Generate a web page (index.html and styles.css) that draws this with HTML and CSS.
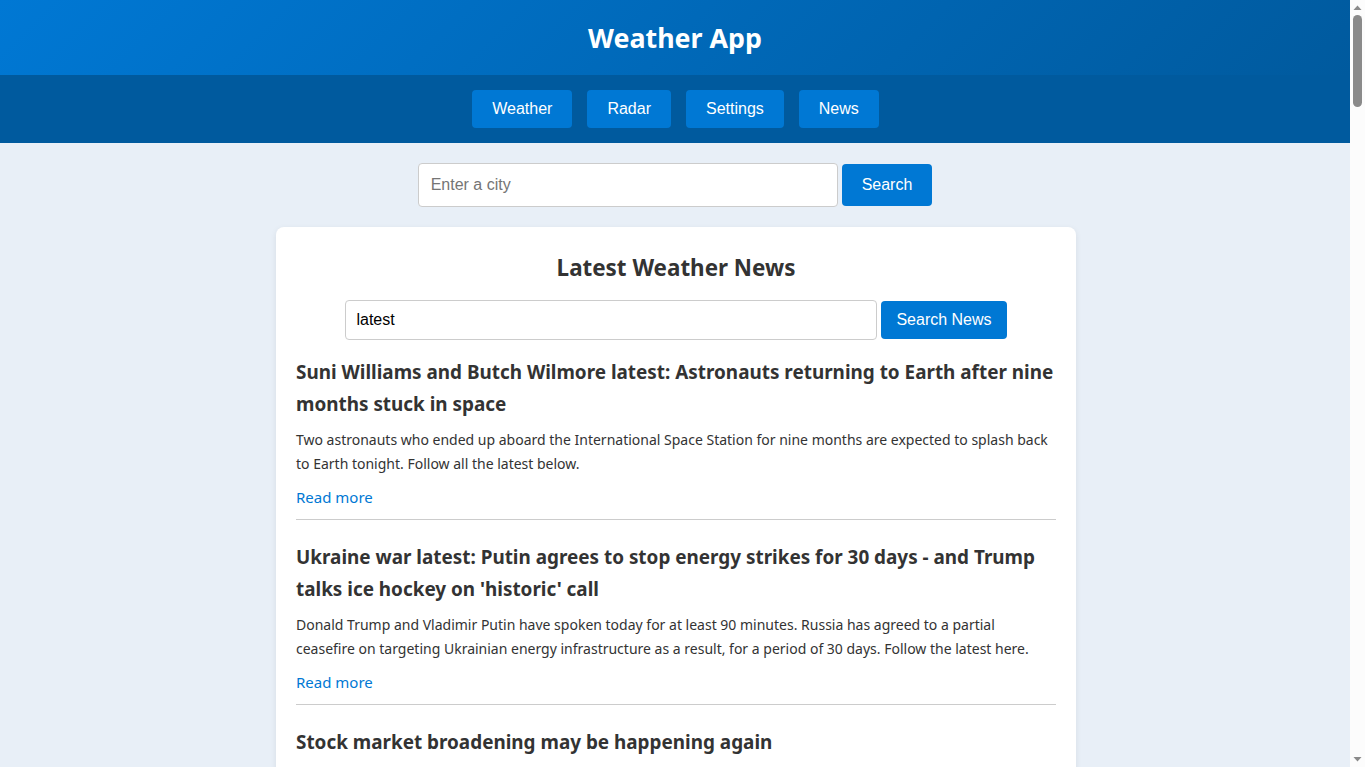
FILE: index.html
```html
<!DOCTYPE html>
<html lang="en">
<head>
<meta charset="utf-8">
<title>Weather App</title>
<link rel="stylesheet" href="styles.css">
</head>
<body>
<header class="app-header">
  <h1 class="app-title">Weather App</h1>
</header>
<nav class="nav-bar">
  <button class="nav-btn">Weather</button>
  <button class="nav-btn">Radar</button>
  <button class="nav-btn">Settings</button>
  <button class="nav-btn">News</button>
</nav>
<main class="content">
  <div class="city-search">
    <input class="city-input" type="text" placeholder="Enter a city">
    <button class="city-btn">Search</button>
  </div>
  <section class="news-card">
    <h2 class="news-heading">Latest Weather News</h2>
    <div class="news-search">
      <input class="news-input" type="text" value="latest">
      <button class="news-btn">Search News</button>
    </div>
    <article class="news-item">
      <h3 class="news-title">Suni Williams and Butch Wilmore latest: Astronauts returning to Earth after nine months stuck in space</h3>
      <p class="news-desc">Two astronauts who ended up aboard the International Space Station for nine months are expected to splash back to Earth tonight. Follow all the latest below.</p>
      <a class="news-link" href="#">Read more</a>
    </article>
    <article class="news-item">
      <h3 class="news-title">Ukraine war latest: Putin agrees to stop energy strikes for 30 days - and Trump talks ice hockey on 'historic' call</h3>
      <p class="news-desc">Donald Trump and Vladimir Putin have spoken today for at least 90 minutes. Russia has agreed to a partial ceasefire on targeting Ukrainian energy infrastructure as a result, for a period of 30 days. Follow the latest here.</p>
      <a class="news-link" href="#">Read more</a>
    </article>
    <article class="news-item last">
      <h3 class="news-title">Stock market broadening may be happening again</h3>
    </article>
  </section>
</main>
<div class="scrollbar" aria-hidden="true">
  <svg class="sb-arrow" width="15" height="15" viewBox="0 0 15 15"><path d="M3.5 10 L7.5 5.5 L11.5 10 Z" fill="#8a8a8a"/></svg>
  <div class="sb-thumb"></div>
  <div class="sb-track"></div>
  <svg class="sb-arrow" width="15" height="15" viewBox="0 0 15 15"><path d="M3.5 5 L7.5 9.5 L11.5 5 Z" fill="#8a8a8a"/></svg>
</div>
</body>
</html>
```
FILE: styles.css
```css
* { box-sizing: border-box; }

html, body { overflow: hidden; }

body {
  margin: 0;
  padding-right: 15px;
  background: #e8eff7;
  font-family: "Noto Sans", "Open Sans", sans-serif;
  color: #333;
}

.app-header {
  background: linear-gradient(135deg, #0078d4 0%, #005a9e 100%);
  padding: 20px 0;
  text-align: center;
}

.app-title {
  margin: 0;
  font-size: 26.8px;
  line-height: 35px;
  font-weight: 700;
  color: #fff;
}

.nav-bar {
  background: #005a9e;
  padding: 15px 0 15px 1px;
  display: flex;
  justify-content: center;
  gap: 15px;
}

.nav-btn {
  font-family: "Liberation Sans", Arial, sans-serif;
  font-size: 16px;
  line-height: 18px;
  padding: 10px 20px;
  background: #0078d4;
  color: #fff;
  border: none;
  border-radius: 4px;
}

.content {
  padding: 20px 0 40px;
}

.city-search {
  display: flex;
  justify-content: center;
  align-items: center;
  gap: 4px;
  margin-bottom: 20px;
}

.city-input {
  width: 420px;
  padding: 12px;
  font-family: "Liberation Sans", Arial, sans-serif;
  font-size: 16px;
  line-height: 18px;
  border: 1px solid #ccc;
  border-radius: 4px;
  color: #000;
  background: #fff;
}

.city-input::placeholder { color: #757575; }

.city-btn {
  font-family: "Liberation Sans", Arial, sans-serif;
  font-size: 16px;
  line-height: 18px;
  padding: 12px 20px;
  background: #0078d4;
  color: #fff;
  border: none;
  border-radius: 4px;
}

.news-card {
  width: 800px;
  margin: 0 auto;
  padding: 20px;
  background: #fff;
  border-radius: 8px;
  box-shadow: 0 2px 6px rgba(0, 0, 0, 0.08);
  position: relative;
  left: 1px;
}

.news-heading {
  margin: 0 0 11px;
  text-align: center;
  font-size: 22.4px;
  line-height: 42px;
  font-weight: 700;
  color: #333;
}

.news-search {
  display: flex;
  justify-content: center;
  align-items: center;
  gap: 4px;
  margin-bottom: 16px;
}

.news-input {
  width: 532px;
  padding: 10px;
  font-family: "Liberation Sans", Arial, sans-serif;
  font-size: 16px;
  line-height: 18px;
  border: 1px solid #ccc;
  border-radius: 4px;
  color: #000;
  background: #fff;
}

.news-btn {
  font-family: "Liberation Sans", Arial, sans-serif;
  font-size: 16px;
  line-height: 18px;
  padding: 10px 15px;
  background: #0078d4;
  color: #fff;
  border: none;
  border-radius: 4px;
}

.news-item {
  border-bottom: 1px solid #ccc;
  padding-bottom: 10px;
  margin-bottom: 21px;
}

.news-item.last {
  border-bottom: none;
  margin-bottom: 0;
  padding-bottom: 0;
}

.news-title {
  margin: 0;
  font-size: 18.9px;
  line-height: 32px;
  font-weight: 700;
  color: #333;
}

.news-desc {
  margin: 8px 0 9px;
  font-size: 14px;
  line-height: 24px;
  color: #333;
}

.news-link {
  display: block;
  font-size: 15px;
  line-height: 24px;
  color: #0078d4;
  text-decoration: none;
}

.scrollbar {
  position: fixed;
  top: 0;
  right: 0;
  width: 15px;
  height: 100vh;
  background: #fcfcfc;
  display: flex;
  flex-direction: column;
  align-items: center;
}

.sb-arrow {
  display: block;
  flex: none;
}

.sb-thumb {
  flex: none;
  width: 9px;
  height: 92px;
  border-radius: 5px;
  background: #8a8a8a;
}

.sb-track {
  flex: 1;
}
```
